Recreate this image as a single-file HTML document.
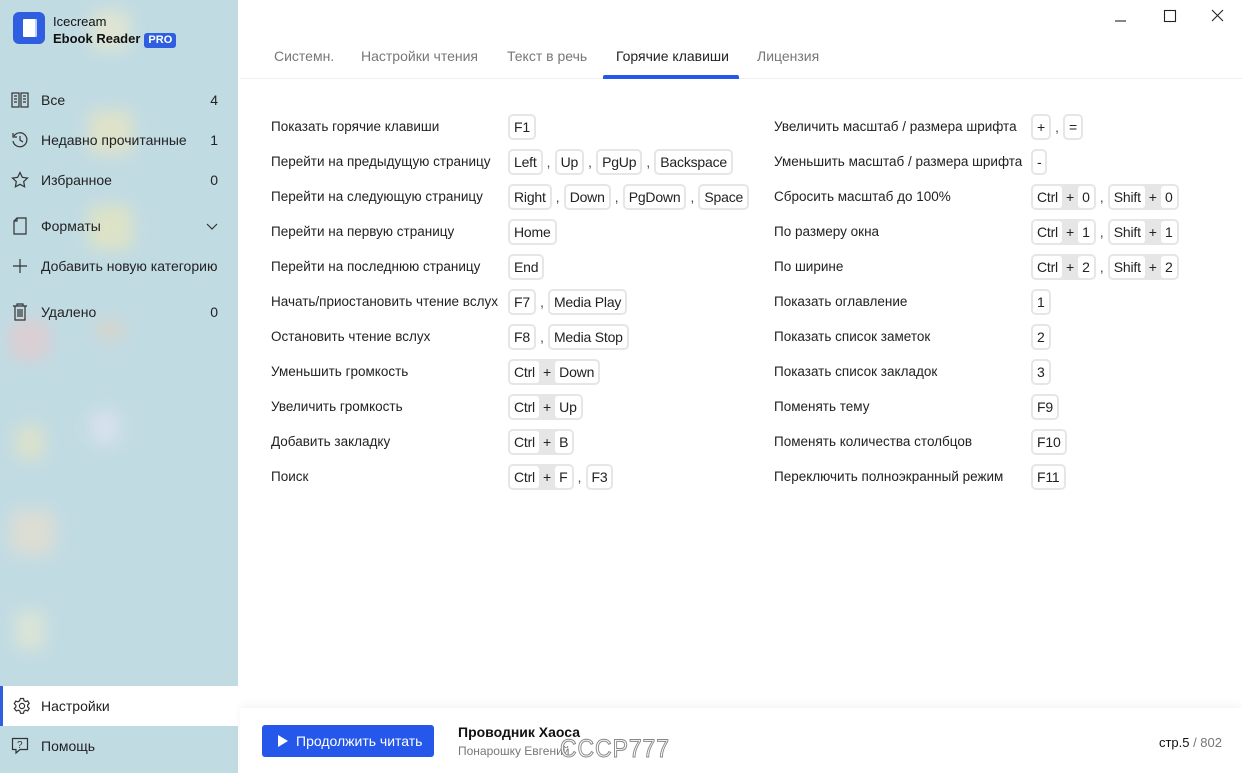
<!DOCTYPE html>
<html><head><meta charset="utf-8">
<style>
*{box-sizing:border-box;margin:0;padding:0}
body{width:1242px;height:773px;overflow:hidden;font-family:"Liberation Sans",sans-serif;font-size:13.5px;color:#222;background:#fff;position:relative}
.side{position:absolute;left:0;top:0;width:238px;height:773px;background:#c1dbe3;overflow:hidden}
.blob{position:absolute;border-radius:10px;filter:blur(8px);opacity:.55}
.logo{position:absolute;left:13px;top:12px;width:32px;height:32px;border-radius:6px;background:#2f5ee0}
.logo:after{content:"";position:absolute;left:10px;top:7px;width:12px;height:18px;background:#fff;border-radius:1px;box-shadow:2px 0 0 #bcd0ff}
.brand{position:absolute;left:53px;top:13px;font-size:13px;line-height:17px;color:#111}
.brand b{font-weight:600}
.pro{display:inline-block;background:#2f5ee0;color:#fff;font-size:11px;font-weight:bold;padding:0 4px;line-height:15px;border-radius:3px;margin-left:4px}
.nav{position:absolute;left:0;width:238px;height:40px;display:flex;align-items:center;font-size:14px;color:#222}
.nav .ic{width:41px;display:flex;justify-content:center;padding-right:0}
.nav .ic svg{margin-left:-1px}
.nav .n{position:absolute;right:20px}
.sel{background:#fff;border-left:3px solid #2f5ee0}
.tabs{position:absolute;left:274px;top:48px;font-size:14px;color:#777}
.tab{position:absolute;top:0;white-space:nowrap}
.tabline{position:absolute;left:240px;right:0;top:78px;height:1px;background:#efefef}
.row{position:absolute;display:flex;align-items:center;height:26px}
.lab{position:absolute;white-space:nowrap;height:26px;line-height:26px}
.g{display:inline-flex;align-items:center;background:#e6e6e6;border-radius:5px;padding:2px;height:26px}
.k{background:#fff;border-radius:3px;padding:0 4px;line-height:22px;height:22px;font-size:14px;letter-spacing:-.2px}
.p{padding:0 4px;font-size:14px}
.c{width:12px;text-align:center;color:#444}
.bottom{position:absolute;left:240px;right:0;top:708px;height:65px;background:#fff;box-shadow:0 -4px 8px rgba(0,0,0,.04)}
.btn{position:absolute;left:262px;top:725px;width:172px;height:32px;background:#2457ea;border-radius:3px;color:#fff;font-size:14px;line-height:32px;padding-left:34px}
.btn:before{content:"";position:absolute;left:16px;top:10px;border-left:10px solid #fff;border-top:6px solid transparent;border-bottom:6px solid transparent}
</style></head><body>
<div class="side">
<div class="blob" style="left:90px;top:10px;width:40px;height:40px;background:#f7ecc5"></div>
<div class="blob" style="left:88px;top:110px;width:45px;height:45px;background:#f6e8b5"></div>
<div class="blob" style="left:88px;top:205px;width:45px;height:45px;background:#f3e9b0"></div>
<div class="blob" style="left:10px;top:320px;width:40px;height:40px;background:#f0c4c4"></div>
<div class="blob" style="left:95px;top:320px;width:30px;height:20px;background:#e8d0b8"></div>
<div class="blob" style="left:15px;top:425px;width:30px;height:35px;background:#efe6b8"></div>
<div class="blob" style="left:90px;top:410px;width:30px;height:35px;background:#e9e6f3"></div>
<div class="blob" style="left:10px;top:510px;width:45px;height:45px;background:#f3dfc8"></div>
<div class="blob" style="left:15px;top:610px;width:30px;height:40px;background:#efeccc"></div>
<div class="logo"></div>
<div class="brand">Icecream<br><b>Ebook Reader</b><span class="pro">PRO</span></div>
<div class="nav" style="top:80px"><div class="ic"><svg width="18" height="16" viewBox="0 0 18 16" fill="none" stroke="#333" stroke-width="1.2"><rect x="1" y="1" width="7" height="14"/><rect x="10" y="1" width="7" height="14"/><path d="M3 4h3M3 7h3M3 10h3M12 4h3M12 7h3M12 10h3"/></svg></div>Все<span class="n">4</span></div>
<div class="nav" style="top:120px"><div class="ic"><svg width="18" height="18" viewBox="0 0 18 18" fill="none" stroke="#333" stroke-width="1.2"><path d="M3 5A7 7 0 1 1 2 10"/><path d="M2 2v4h4"/><path d="M9 5v4l3 2"/></svg></div>Недавно прочитанные<span class="n">1</span></div>
<div class="nav" style="top:160px"><div class="ic"><svg width="18" height="18" viewBox="0 0 18 18" fill="none" stroke="#333" stroke-width="1.2"><path d="M9 1.5l2.3 4.8 5.2.7-3.8 3.6.9 5.2L9 13.3l-4.6 2.5.9-5.2L1.5 7l5.2-.7z"/></svg></div>Избранное<span class="n">0</span></div>
<div class="nav" style="top:206px"><div class="ic"><svg width="16" height="18" viewBox="0 0 16 18" fill="none" stroke="#333" stroke-width="1.2"><path d="M5 1h9v16H2V4z"/><path d="M5 1v3H2"/></svg></div>Форматы<span class="n"><svg width="12" height="8" viewBox="0 0 12 8" fill="none" stroke="#333" stroke-width="1.2"><path d="M1 1l5 5 5-5"/></svg></span></div>
<div class="nav" style="top:246px"><div class="ic"><svg width="16" height="16" viewBox="0 0 16 16" stroke="#333" stroke-width="1.2"><path d="M8 1v14M1 8h14"/></svg></div>Добавить новую категорию</div>
<div class="nav" style="top:292px"><div class="ic"><svg width="16" height="18" viewBox="0 0 16 18" fill="none" stroke="#333" stroke-width="1.2"><path d="M1 3h14M5 3V1h6v2M3 3v14h10V3M6 6v8M8 6v8M10 6v8"/></svg></div>Удалено<span class="n">0</span></div>
<div class="nav sel" style="top:686px"><div class="ic" style="width:38px"><svg width="18" height="18" viewBox="0 0 18 18" fill="none" stroke="#333" stroke-width="1.2"><circle cx="9" cy="9" r="2.6"/><path d="M7.5 1.5h3l.5 2.2 1.6.9 2.1-.7 1.5 2.6-1.6 1.5v1.8l1.6 1.5-1.5 2.6-2.1-.7-1.6.9-.5 2.2h-3l-.5-2.2-1.6-.9-2.1.7L1.3 11.5l1.6-1.5V8.2L1.3 6.7 2.8 4.1l2.1.7 1.6-.9z"/></svg></div>Настройки</div>
<div class="nav" style="top:726px"><div class="ic"><svg width="18" height="18" viewBox="0 0 18 18" fill="none" stroke="#333" stroke-width="1.2"><path d="M1.5 1.5h15v11H9l-4 3.5v-3.5H1.5z"/><text x="6" y="11" font-size="10" fill="#333" stroke="none" font-family="Liberation Sans">?</text></svg></div>Помощь</div>
</div>

<svg style="position:absolute;left:1114px;top:8px" width="120" height="18" viewBox="0 0 120 18" fill="none" stroke="#222" stroke-width="1.1"><path d="M1 13h11"/><rect x="50.5" y="2.5" width="11" height="11"/><path d="M98 2l11 11M109 2L98 13"/></svg>

<div class="tabs">
<span class="tab" style="left:0">Системн.</span>
<span class="tab" style="left:87px">Настройки чтения</span>
<span class="tab" style="left:233px">Текст в речь</span>
<span class="tab" style="left:342px;color:#222">Горячие клавиши</span>
<span class="tab" style="left:483px">Лицензия</span>
</div>
<div class="tabline"></div>
<div style="position:absolute;left:603px;top:75px;width:136px;height:4px;background:#2457ea;border-radius:2px 2px 0 0"></div>

<div class="lab" style="left:271px;top:114px">Показать горячие клавиши</div>
<div class="row" style="left:508px;top:114px"><span class="g"><span class="k">F1</span></span></div>
<div class="lab" style="left:271px;top:149px">Перейти на предыдущую страницу</div>
<div class="row" style="left:508px;top:149px"><span class="g"><span class="k">Left</span></span><span class="c">,</span><span class="g"><span class="k">Up</span></span><span class="c">,</span><span class="g"><span class="k">PgUp</span></span><span class="c">,</span><span class="g"><span class="k">Backspace</span></span></div>
<div class="lab" style="left:271px;top:184px">Перейти на следующую страницу</div>
<div class="row" style="left:508px;top:184px"><span class="g"><span class="k">Right</span></span><span class="c">,</span><span class="g"><span class="k">Down</span></span><span class="c">,</span><span class="g"><span class="k">PgDown</span></span><span class="c">,</span><span class="g"><span class="k">Space</span></span></div>
<div class="lab" style="left:271px;top:219px">Перейти на первую страницу</div>
<div class="row" style="left:508px;top:219px"><span class="g"><span class="k">Home</span></span></div>
<div class="lab" style="left:271px;top:254px">Перейти на последнюю страницу</div>
<div class="row" style="left:508px;top:254px"><span class="g"><span class="k">End</span></span></div>
<div class="lab" style="left:271px;top:289px">Начать/приостановить чтение вслух</div>
<div class="row" style="left:508px;top:289px"><span class="g"><span class="k">F7</span></span><span class="c">,</span><span class="g"><span class="k">Media Play</span></span></div>
<div class="lab" style="left:271px;top:324px">Остановить чтение вслух</div>
<div class="row" style="left:508px;top:324px"><span class="g"><span class="k">F8</span></span><span class="c">,</span><span class="g"><span class="k">Media Stop</span></span></div>
<div class="lab" style="left:271px;top:359px">Уменьшить громкость</div>
<div class="row" style="left:508px;top:359px"><span class="g"><span class="k">Ctrl</span><span class="p">+</span><span class="k">Down</span></span></div>
<div class="lab" style="left:271px;top:394px">Увеличить громкость</div>
<div class="row" style="left:508px;top:394px"><span class="g"><span class="k">Ctrl</span><span class="p">+</span><span class="k">Up</span></span></div>
<div class="lab" style="left:271px;top:429px">Добавить закладку</div>
<div class="row" style="left:508px;top:429px"><span class="g"><span class="k">Ctrl</span><span class="p">+</span><span class="k">B</span></span></div>
<div class="lab" style="left:271px;top:464px">Поиск</div>
<div class="row" style="left:508px;top:464px"><span class="g"><span class="k">Ctrl</span><span class="p">+</span><span class="k">F</span></span><span class="c">,</span><span class="g"><span class="k">F3</span></span></div>

<div class="lab" style="left:774px;top:114px">Увеличить масштаб / размера шрифта</div>
<div class="row" style="left:1031px;top:114px"><span class="g"><span class="k">+</span></span><span class="c">,</span><span class="g"><span class="k">=</span></span></div>
<div class="lab" style="left:774px;top:149px">Уменьшить масштаб / размера шрифта</div>
<div class="row" style="left:1031px;top:149px"><span class="g"><span class="k">-</span></span></div>
<div class="lab" style="left:774px;top:184px">Сбросить масштаб до 100%</div>
<div class="row" style="left:1031px;top:184px"><span class="g"><span class="k">Ctrl</span><span class="p">+</span><span class="k">0</span></span><span class="c">,</span><span class="g"><span class="k">Shift</span><span class="p">+</span><span class="k">0</span></span></div>
<div class="lab" style="left:774px;top:219px">По размеру окна</div>
<div class="row" style="left:1031px;top:219px"><span class="g"><span class="k">Ctrl</span><span class="p">+</span><span class="k">1</span></span><span class="c">,</span><span class="g"><span class="k">Shift</span><span class="p">+</span><span class="k">1</span></span></div>
<div class="lab" style="left:774px;top:254px">По ширине</div>
<div class="row" style="left:1031px;top:254px"><span class="g"><span class="k">Ctrl</span><span class="p">+</span><span class="k">2</span></span><span class="c">,</span><span class="g"><span class="k">Shift</span><span class="p">+</span><span class="k">2</span></span></div>
<div class="lab" style="left:774px;top:289px">Показать оглавление</div>
<div class="row" style="left:1031px;top:289px"><span class="g"><span class="k">1</span></span></div>
<div class="lab" style="left:774px;top:324px">Показать список заметок</div>
<div class="row" style="left:1031px;top:324px"><span class="g"><span class="k">2</span></span></div>
<div class="lab" style="left:774px;top:359px">Показать список закладок</div>
<div class="row" style="left:1031px;top:359px"><span class="g"><span class="k">3</span></span></div>
<div class="lab" style="left:774px;top:394px">Поменять тему</div>
<div class="row" style="left:1031px;top:394px"><span class="g"><span class="k">F9</span></span></div>
<div class="lab" style="left:774px;top:429px">Поменять количества столбцов</div>
<div class="row" style="left:1031px;top:429px"><span class="g"><span class="k">F10</span></span></div>
<div class="lab" style="left:774px;top:464px">Переключить полноэкранный режим</div>
<div class="row" style="left:1031px;top:464px"><span class="g"><span class="k">F11</span></span></div>

<div class="bottom"></div>
<div class="btn">Продолжить читать</div>
<div style="position:absolute;left:458px;top:724px;font-size:14px;font-weight:bold;color:#111">Проводник Хаоса</div>
<div style="position:absolute;left:458px;top:744px;font-size:12px;color:#777">Понарошку Евгений</div>
<div style="position:absolute;left:560px;top:735px;font-size:25px;letter-spacing:1px;color:#fff;-webkit-text-stroke:1px #888;font-family:'Liberation Sans',sans-serif;line-height:28px;transform:scaleX(.92);transform-origin:left">СССР777</div>
<div style="position:absolute;right:20px;top:735px;font-size:13px;color:#111">стр.5 <span style="color:#777">/ 802</span></div>
</body></html>
